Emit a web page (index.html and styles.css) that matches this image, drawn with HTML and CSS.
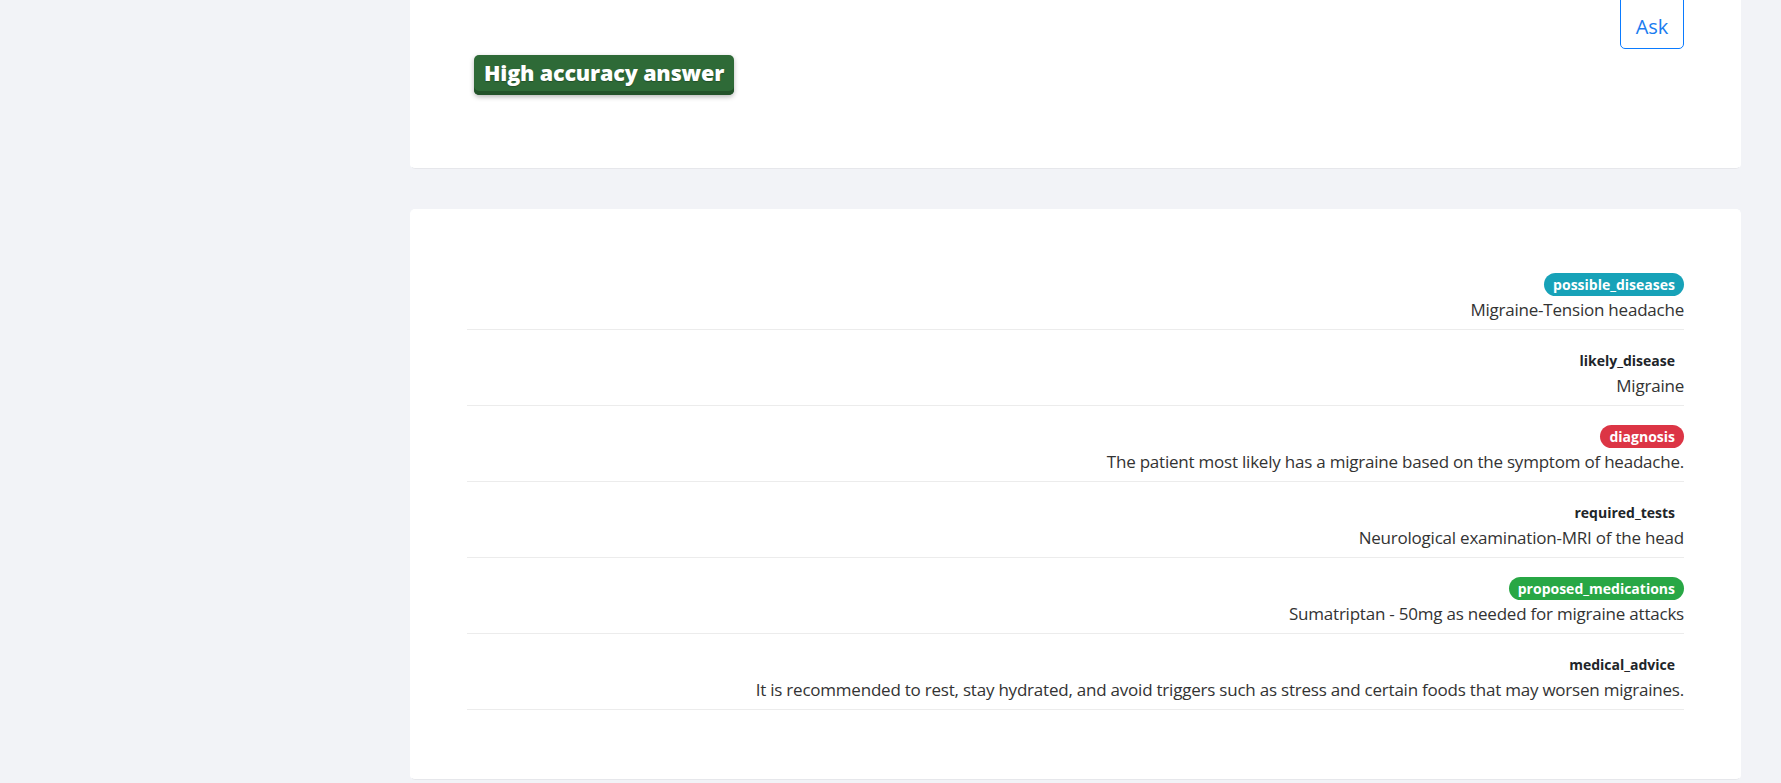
FILE: index.html
```html
<!DOCTYPE html>
<html lang="en">
<head>
<meta charset="utf-8">
<title>Diagnosis</title>
<link rel="stylesheet" href="styles.css">
</head>
<body>
<div class="layout">
  <aside class="sidebar"></aside>
  <main class="main">
    <section class="card card-ask">
      <div class="ask-row">
        <button class="btn-ask" type="button">Ask</button>
      </div>
      <div class="accuracy-row">
        <span class="accuracy-badge">High accuracy answer</span>
      </div>
    </section>

    <section class="card card-result">
      <div class="result-row">
        <div class="label"><span class="badge badge-info">possible_diseases</span></div>
        <div class="value">Migraine-Tension headache</div>
      </div>
      <div class="result-row">
        <div class="label"><span class="badge badge-plain">likely_disease</span></div>
        <div class="value">Migraine</div>
      </div>
      <div class="result-row">
        <div class="label"><span class="badge badge-danger">diagnosis</span></div>
        <div class="value">The patient most likely has a migraine based on the symptom of headache.</div>
      </div>
      <div class="result-row">
        <div class="label"><span class="badge badge-plain">required_tests</span></div>
        <div class="value">Neurological examination-MRI of the head</div>
      </div>
      <div class="result-row">
        <div class="label"><span class="badge badge-success">proposed_medications</span></div>
        <div class="value">Sumatriptan - 50mg as needed for migraine attacks</div>
      </div>
      <div class="result-row">
        <div class="label"><span class="badge badge-plain">medical_advice</span></div>
        <div class="value">It is recommended to rest, stay hydrated, and avoid triggers such as stress and certain foods that may worsen migraines.</div>
      </div>
    </section>
  </main>
</div>
</body>
</html>
```

FILE: styles.css
```css
* { box-sizing: border-box; }

html, body {
  margin: 0;
  padding: 0;
  background: #f2f3f7;
  font-family: "Open Sans", "Noto Sans", "Liberation Sans", sans-serif;
  color: #333;
  overflow: hidden;
}

.layout {
  display: grid;
  grid-template-columns: 410px 1fr;
  margin-top: -20px;
}

.main {
  padding-right: 40px;
  display: flex;
  flex-direction: column;
  gap: 40px;
}

.card {
  background: #fff;
  border-radius: 5px;
  border: 1px solid #fff;
  border-bottom-color: #e6e7eb;
}

.card-ask {
  padding: 12px 56px 73px 56px;
}

.ask-row {
  display: flex;
  justify-content: flex-end;
}

.btn-ask {
  font-family: inherit;
  font-size: 20px;
  line-height: 30px;
  color: #1a7cf0;
  background: #fff;
  border: 1px solid #0a7bff;
  border-radius: 5px;
  padding: 18px 13px 6px 13px;
  width: 64px;
  height: 56px;
  cursor: pointer;
}

.accuracy-row {
  margin-top: 6px;
  padding-left: 7px;
}

.accuracy-badge {
  display: inline-block;
  background: #2e6a37;
  color: #fff;
  font-weight: 800;
  font-size: 21.5px;
  letter-spacing: -0.15px;
  line-height: 36px;
  height: 40px;
  padding: 0 10px;
  border-radius: 5px;
  box-shadow: inset 0 -4px 0 #23532a, 0 2px 5px rgba(0, 0, 0, 0.28);
  text-shadow: 0 1px 1px rgba(0, 0, 0, 0.25);
}

.card-result {
  padding: 44px 56px 69px 56px;
}

.result-row {
  padding: 19px 0 6px 0;
  border-bottom: 1px solid #ececec;
  text-align: right;
}

.label {
  height: 23px;
}

.badge {
  display: inline-block;
  height: 23px;
  line-height: 23px;
  padding: 0 9px;
  border-radius: 12px;
  font-size: 14px;
  font-weight: 700;
  color: #fff;
  vertical-align: top;
}

.badge-info { background: #17a2b8; }
.badge-danger { background: #dc3545; }
.badge-success { background: #28a745; }
.badge-plain {
  color: #212529;
  background: transparent;
}

.value {
  font-size: 17px;
  line-height: 27px;
  letter-spacing: -0.22px;
  color: #333;
}
```
